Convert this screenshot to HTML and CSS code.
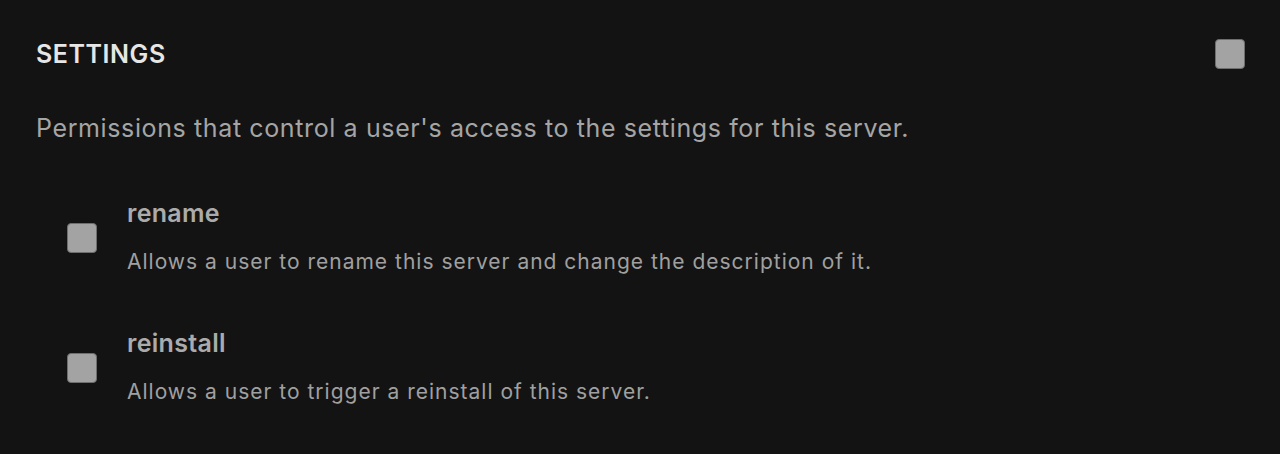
FILE: index.html
```html
<!DOCTYPE html>
<html>
<head>
<meta charset="utf-8">
<link rel="stylesheet" href="styles.css">
</head>
<body>
<section class="panel">
  <header class="head">
    <h2 class="title">SETTINGS</h2>
    <span class="box"></span>
  </header>
  <p class="intro">Permissions that control a user's access to the settings for this server.</p>
  <div class="perm">
    <span class="box"></span>
    <div class="perm-text">
      <div class="perm-name">rename</div>
      <div class="perm-desc">Allows a user to rename this server and change the description of it.</div>
    </div>
  </div>
  <div class="perm">
    <span class="box"></span>
    <div class="perm-text">
      <div class="perm-name">reinstall</div>
      <div class="perm-desc">Allows a user to trigger a reinstall of this server.</div>
    </div>
  </div>
</section>
</body>
</html>
```
FILE: styles.css
```css
html, body {
  margin: 0;
  background: #131313;
  height: 100%;
}
body {
  font-family: Inter, "Noto Sans", sans-serif;
}
.panel {
  padding: 38px 35px 0 36px;
}
.head {
  display: flex;
  align-items: center;
  justify-content: space-between;
  height: 32px;
}
.title {
  margin: 0;
  font-size: 25px;
  font-weight: 600;
  color: #e6e6e6;
  letter-spacing: 0.55px;
}
.box {
  display: block;
  width: 28px;
  height: 28px;
  background: #a3a3a3;
  border: 1px solid #6e6e6e;
  border-radius: 4px;
  flex: none;
}
.intro {
  margin: 42px 0 0 0;
  font-size: 25px;
  color: #a5a5a5;
  letter-spacing: 0.62px;
  line-height: 32px;
}
.perm {
  display: flex;
  align-items: center;
  gap: 30px;
  padding-left: 31px;
  margin-top: 53px;
}
.perm + .perm {
  margin-top: 49px;
}
.perm-name {
  font-size: 25px;
  font-weight: 600;
  color: #ababab;
  line-height: 32px;
  letter-spacing: 0.3px;
}
.perm-desc {
  margin-top: 17px;
  font-size: 21px;
  color: #a0a0a0;
  letter-spacing: 1px;
  line-height: 32px;
}
```
